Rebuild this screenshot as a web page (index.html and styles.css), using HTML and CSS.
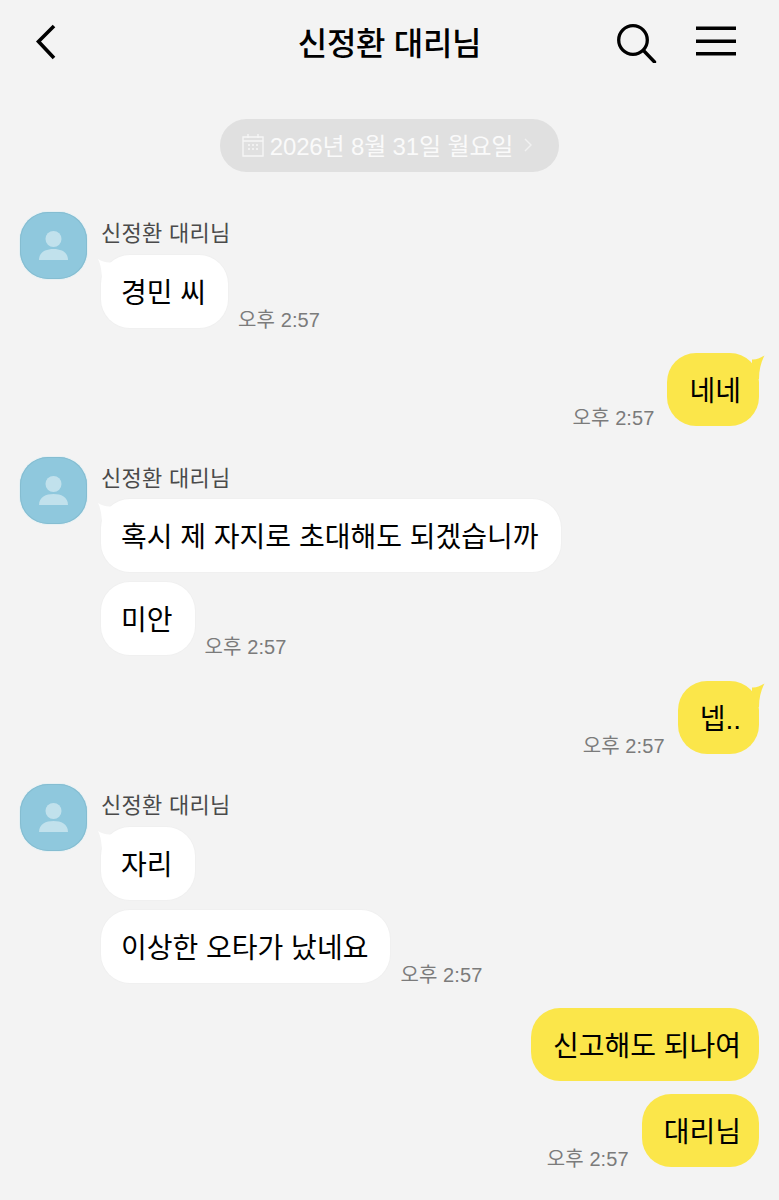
FILE: index.html
```html
<!DOCTYPE html>
<html lang="ko">
<head>
<meta charset="utf-8">
<title>신정환 대리님</title>
<link rel="stylesheet" href="styles.css">
</head>
<body>
<div class="screen">
  <header class="topbar">
    <svg class="icon-back" width="24" height="38" viewBox="0 0 24 38"><path d="M20 3 L4.5 18.5 L20 35" fill="none" stroke="#000" stroke-width="3.6"/></svg>
    <h1 class="title">신정환 대리님</h1>
    <div class="actions">
      <svg class="icon-search" width="42" height="42" viewBox="0 0 42 42"><circle cx="17" cy="19" r="14.3" fill="none" stroke="#000" stroke-width="3.3"/><path d="M27.5 29.5 L38.5 41" stroke="#000" stroke-width="3.4" stroke-linecap="round" fill="none"/></svg>
      <svg class="icon-menu" width="40" height="32" viewBox="0 0 40 32"><path d="M0 2.2 H40 M0 15.2 H40 M0 27.8 H40" stroke="#000" stroke-width="3.6" fill="none"/></svg>
    </div>
  </header>

  <main class="chat">
    <div class="date-wrap">
      <div class="date-pill">
        <svg width="22" height="26" viewBox="0 0 22 26"><path d="M1 5 H21 V24 H1 Z M1 9 H21 M6 2 V6 M16 2 V6" fill="none" stroke="#f6f6f6" stroke-width="1.4"/><path d="M6 13 h2 M10 13 h2 M14 13 h2 M6 17 h2 M10 17 h2 M14 17 h2" stroke="#f6f6f6" stroke-width="1.6"/></svg>
        <span>2026년 8월 31일 월요일</span>
        <svg width="10" height="16" viewBox="0 0 10 16"><path d="M2 2 L8 8 L2 14" fill="none" stroke="#f1f1f1" stroke-width="1.4"/></svg>
      </div>
    </div>

    <section class="group in">
      <div class="avatar"><svg width="67" height="67" viewBox="0 0 67 67"><circle cx="33.5" cy="27" r="8" fill="#c1e1ec"/><path d="M19 48 C19 40 26 37 33.5 37 C41 37 48 40 48 48 Z" fill="#c1e1ec"/></svg></div>
      <div class="stack">
        <div class="name">신정환 대리님</div>
        <div class="row">
          <div class="bubble white tailed"><span class="msg">경민 씨</span><svg class="tail" width="16" height="24" viewBox="0 0 16 24"><path d="M1 1 C5 3.5 9 5 15 4.5 L15 24 L5 24 C5 15 4 7 1 1 Z" fill="#fff"/></svg></div>
          <time class="time">오후 2:57</time>
        </div>
      </div>
    </section>

    <section class="group out gap-25">
      <div class="row">
        <time class="time">오후 2:57</time>
        <div class="bubble yellow tailed"><span class="msg">네네</span><svg class="tail" width="18" height="24" viewBox="0 0 18 24"><path d="M17.5 0.5 C13 3 9 5 5 4.5 L5 24 L12 24 C12 15 14 7 17.5 0.5 Z" fill="#fbe64a"/></svg></div>
      </div>
    </section>

    <section class="group in gap-31">
      <div class="avatar"><svg width="67" height="67" viewBox="0 0 67 67"><circle cx="33.5" cy="27" r="8" fill="#c1e1ec"/><path d="M19 48 C19 40 26 37 33.5 37 C41 37 48 40 48 48 Z" fill="#c1e1ec"/></svg></div>
      <div class="stack">
        <div class="name tight">신정환 대리님</div>
        <div class="row">
          <div class="bubble white tailed"><span class="msg">혹시 제 자지로 초대해도 되겠습니까</span><svg class="tail" width="16" height="24" viewBox="0 0 16 24"><path d="M1 1 C5 3.5 9 5 15 4.5 L15 24 L5 24 C5 15 4 7 1 1 Z" fill="#fff"/></svg></div>
        </div>
        <div class="row next">
          <div class="bubble white"><span class="msg">미안</span></div>
          <time class="time">오후 2:57</time>
        </div>
      </div>
    </section>

    <section class="group out gap-26">
      <div class="row">
        <time class="time">오후 2:57</time>
        <div class="bubble yellow tailed"><span class="msg">넵..</span><svg class="tail" width="18" height="24" viewBox="0 0 18 24"><path d="M17.5 0.5 C13 3 9 5 5 4.5 L5 24 L12 24 C12 15 14 7 17.5 0.5 Z" fill="#fbe64a"/></svg></div>
      </div>
    </section>

    <section class="group in gap-30">
      <div class="avatar"><svg width="67" height="67" viewBox="0 0 67 67"><circle cx="33.5" cy="27" r="8" fill="#c1e1ec"/><path d="M19 48 C19 40 26 37 33.5 37 C41 37 48 40 48 48 Z" fill="#c1e1ec"/></svg></div>
      <div class="stack">
        <div class="name">신정환 대리님</div>
        <div class="row">
          <div class="bubble white tailed"><span class="msg">자리</span><svg class="tail" width="16" height="24" viewBox="0 0 16 24"><path d="M1 1 C5 3.5 9 5 15 4.5 L15 24 L5 24 C5 15 4 7 1 1 Z" fill="#fff"/></svg></div>
        </div>
        <div class="row next">
          <div class="bubble white"><span class="msg">이상한 오타가 났네요</span></div>
          <time class="time">오후 2:57</time>
        </div>
      </div>
    </section>

    <section class="group out gap-25">
      <div class="row">
        <div class="bubble yellow"><span class="msg">신고해도 되나여</span></div>
      </div>
      <div class="row next-out">
        <time class="time">오후 2:57</time>
        <div class="bubble yellow"><span class="msg">대리님</span></div>
      </div>
    </section>
  </main>
</div>
</body>
</html>
```

FILE: styles.css
```css
* { box-sizing: border-box; }

html, body {
  margin: 0;
  padding: 0;
  background: #f3f3f3;
}

body {
  font-family: "Liberation Sans", "Noto Sans CJK KR", sans-serif;
  color: #000;
}

.screen {
  width: 779px;
  height: 1200px;
  overflow: hidden;
}

.topbar {
  height: 85px;
  display: grid;
  grid-template-columns: 1fr auto 1fr;
  align-items: center;
  padding: 0 43px 2px;
}

.icon-back {
  display: block;
  margin-left: -9px;
}

.title {
  margin: 0;
  padding-top: 4px;
  font-size: 32px;
  font-weight: 500;
  letter-spacing: -0.3px;
  line-height: 1;
}

.actions {
  display: flex;
  justify-content: flex-end;
  align-items: center;
  gap: 38px;
}

.actions svg { display: block; }

.chat {
  padding: 34px 20px 0;
}

.date-wrap {
  display: flex;
  justify-content: center;
  margin-bottom: 40px;
}

.date-pill {
  width: 339px;
  height: 53px;
  padding: 0 4px 2px 0;
  border-radius: 27px;
  background: #e0e0e0;
  color: #fafafa;
  font-size: 24px;
  letter-spacing: -0.15px;
  display: flex;
  align-items: center;
  justify-content: center;
  gap: 6px;
}

.date-pill span { margin-right: 4px; }

.group.in {
  display: flex;
  gap: 14px;
}

.group.out {
  display: flex;
  flex-direction: column;
  align-items: flex-end;
}

.group.out .row { gap: 13px; }

.gap-25 { margin-top: 25px; }
.gap-26 { margin-top: 26px; }
.gap-30 { margin-top: 30px; }
.gap-31 { margin-top: 31px; }

.avatar {
  width: 67px;
  height: 67px;
  border-radius: 28px;
  background: #8fc8dd;
  box-shadow: inset 0 0 0 1px #85bdd1, 0 0 0 1px #e6f0f3;
  flex: none;
}

.avatar svg { display: block; }

.stack { flex: 1; }

.name {
  height: 43px;
  font-size: 22px;
  letter-spacing: 0.3px;
  line-height: 44px;
  color: #4a4a4a;
}

.name.tight { height: 42px; }

.row {
  display: flex;
  align-items: flex-end;
  gap: 10px;
}

.row.next { margin-top: 10px; }
.row.next-out { margin-top: 13px; }

.bubble {
  position: relative;
  height: 73px;
  padding: 0 22px 1px 20px;
  border-radius: 29px;
  display: flex;
  align-items: center;
  font-size: 28px;
  letter-spacing: 0;
  white-space: nowrap;
}

.bubble.white {
  background: #fff;
  box-shadow: 0 0 0 1px #f0f0f0;
}

.bubble.yellow {
  background: #fbe64a;
  padding: 0 18px 1px 22px;
}

.tail { position: absolute; }

.white .tail { left: -4px; top: 3px; }
.yellow .tail { right: -6px; top: 2px; }

.time {
  margin-bottom: -2px;
  font-size: 20px;
  letter-spacing: 0.1px;
  color: #7b7b7b;
  line-height: 20px;
}
```
